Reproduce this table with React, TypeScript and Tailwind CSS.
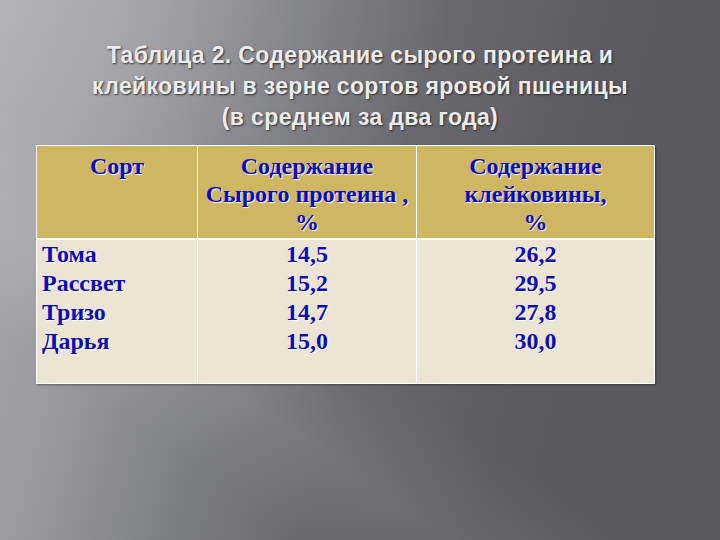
import React from 'react';

const rows = [
  { name: 'Тома', protein: '14,5', gluten: '26,2' },
  { name: 'Рассвет', protein: '15,2', gluten: '29,5' },
  { name: 'Тризо', protein: '14,7', gluten: '27,8' },
  { name: 'Дарья', protein: '15,0', gluten: '30,0' },
];

const cellText =
  "font-['Liberation_Serif',serif] font-bold text-[24px] text-[#0c0cb8] [text-shadow:1px_1px_1px_rgba(255,255,255,0.9)]";

export default function App() {
  return (
    <div className="w-[720px] h-[540px] overflow-hidden relative bg-[linear-gradient(105deg,#a9a9af_0%,#9a9aa0_18%,#7f7f86_35%,#6a6970_52%,#5c5b62_72%,#59585f_100%)]">
      {/* soft light areas */}
      <div className="absolute inset-0 bg-[radial-gradient(ellipse_at_0%_0%,rgba(255,255,255,0.12),transparent_45%)] pointer-events-none" />
      <div className="absolute inset-0 bg-[linear-gradient(35deg,transparent_20%,rgba(255,255,255,0.08)_30%,transparent_42%)] pointer-events-none" />
      <div className="relative flex flex-col pt-[40px]">
        <h1 className="self-center font-['Liberation_Sans',Arial,sans-serif] font-bold text-[23px] tracking-[0.35px] leading-[31px] text-[#ececec] text-center [text-shadow:1px_1px_2px_rgba(40,40,40,0.9)]">
          Таблица 2. Содержание сырого протеина и
          <br />
          клейковины в зерне сортов яровой пшеницы
          <br />
          (в среднем за два года)
        </h1>

        <div className="mt-[12px] ml-[36px] w-[619px] grid grid-cols-[160px_218px_237px] border border-white bg-white gap-x-px gap-y-[2px] shadow-[1px_1px_2px_rgba(0,0,0,0.4)]">
          <div className={`bg-[#cfb663] h-[92px] pt-[6px] text-center leading-[28px] ${cellText}`}>Сорт</div>
          <div className={`bg-[#cfb663] h-[92px] pt-[6px] text-center leading-[28px] ${cellText}`}>
            Содержание
            <br />
            Сырого протеина ,
            <br />%
          </div>
          <div className={`bg-[#cfb663] h-[92px] pt-[6px] text-center leading-[28px] ${cellText}`}>
            Содержание
            <br />
            клейковины,
            <br />%
          </div>

          <div className={`bg-[#ece5d6] h-[143px] pl-[5px] leading-[29px] ${cellText}`}>
            {rows.map((r) => (
              <div key={r.name}>{r.name}</div>
            ))}
          </div>
          <div className={`bg-[#ece5d6] h-[143px] text-center leading-[29px] ${cellText}`}>
            {rows.map((r) => (
              <div key={r.name}>{r.protein}</div>
            ))}
          </div>
          <div className={`bg-[#ece5d6] h-[143px] text-center leading-[29px] ${cellText}`}>
            {rows.map((r) => (
              <div key={r.name}>{r.gluten}</div>
            ))}
          </div>
        </div>
      </div>
    </div>
  );
}
